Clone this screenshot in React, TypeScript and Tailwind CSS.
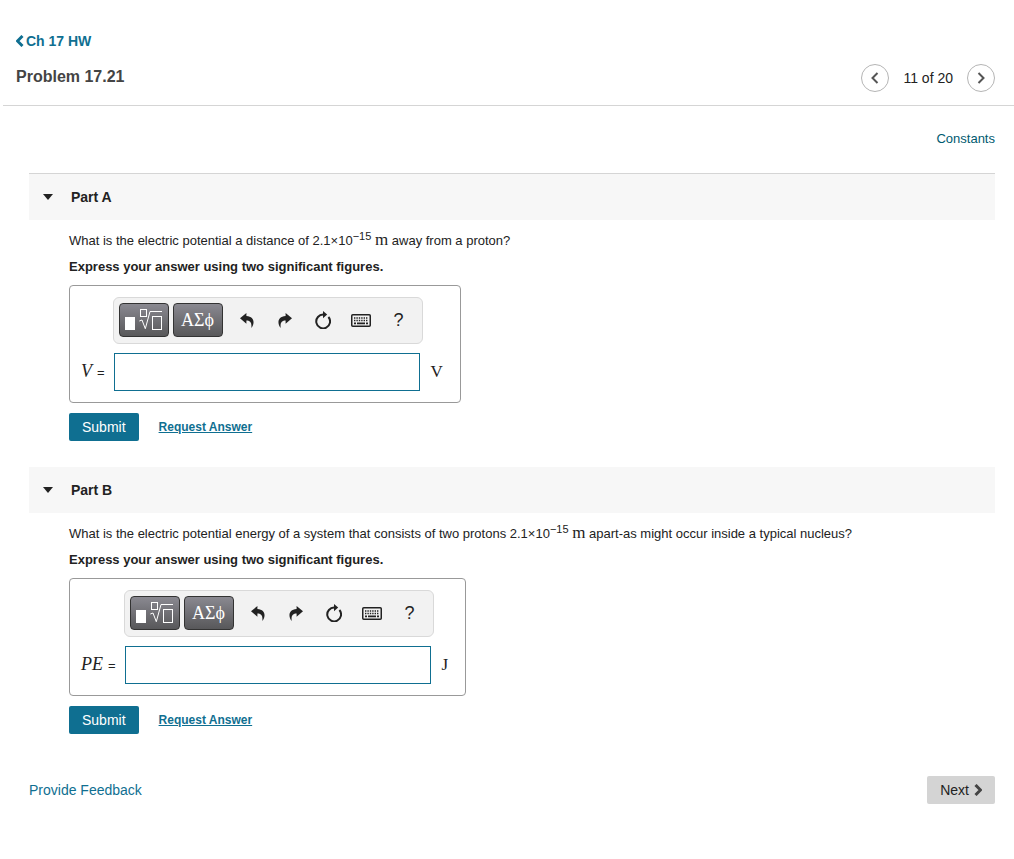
import type { ReactNode } from 'react'

function UndoIcon({ className = '' }: { className?: string }) {
  return (
    <svg className={`h-[15px] w-[14px] ${className}`} viewBox="0 0 14 15" fill="currentColor" aria-hidden>
      <path d="M6.4 0 0 5.3l6.4 5.4V7.6c3.6 0 5.6 1.8 4.9 7.4C15 10.6 14.6 3.4 6.4 3Z" />
    </svg>
  )
}

function ResetIcon() {
  return (
    <svg className="h-[18px] w-4" viewBox="0 0 16 18" aria-hidden>
      <path d="M8.5 3.6A6.9 6.9 0 1 0 13.4 6" fill="none" stroke="currentColor" strokeWidth="2" />
      <path d="M8 0l4.2 3.6L8 7.2Z" fill="currentColor" />
    </svg>
  )
}

function KeyboardIcon() {
  return (
    <svg className="h-[13px] w-5" viewBox="0 0 20 13" aria-hidden>
      <rect x="0.75" y="0.75" width="18.5" height="11.5" rx="1" fill="none" stroke="currentColor" strokeWidth="1.5" />
      <path d="M3 4h14M3 6.5h14" stroke="currentColor" strokeWidth="1.5" strokeDasharray="1.4 1" />
      <path d="M3 9.3h2M6 9.3h8M15 9.3h2" stroke="currentColor" strokeWidth="1.7" />
    </svg>
  )
}

function TemplatesIcon() {
  return (
    <svg className="h-[22px] w-[39px]" viewBox="0 0 39 22" fill="none" stroke="#fff" aria-hidden>
      <rect x="1" y="8" width="10" height="13" fill="#fff" stroke="none" />
      <rect x="16.5" y="0.5" width="6" height="7" />
      <path d="M15.3 12 18 11l3.3 8.7L26 2.5h12" />
      <rect x="28.5" y="7.5" width="9" height="13" />
    </svg>
  )
}

function Chevron({ className, width, flip }: { className: string; width: number; flip?: boolean }) {
  return (
    <svg className={className} viewBox="0 0 8 12" fill="none" stroke="currentColor" strokeWidth={width} aria-hidden>
      <path d={flip ? 'M1.5 1 6.5 6l-5 5' : 'M6.5 1 1.5 6l5 5'} />
    </svg>
  )
}

function ToolButton({ label, children }: { label: string; children: ReactNode }) {
  return (
    <button type="button" aria-label={label} className="flex h-[34px] w-[38px] items-center justify-center">
      {children}
    </button>
  )
}

const paletteClass =
  'flex h-[34px] w-[50px] items-center justify-center rounded border border-[#333] bg-gradient-to-b from-[#8a8991] to-[#58585a] text-white'

function Toolbar() {
  return (
    <div className="flex items-center rounded-md border border-[#d9d9d9] bg-[#f2f2f2] pb-1.5 pl-[5px] pr-1 pt-[5px]">
      <button type="button" aria-label="Templates" className={paletteClass}>
        <TemplatesIcon />
      </button>
      <button type="button" className={`ml-1 mr-[5px] font-["Liberation_Serif",serif] text-[18px] ${paletteClass}`}>
        ΑΣϕ
      </button>
      <ToolButton label="Undo">
        <UndoIcon />
      </ToolButton>
      <ToolButton label="Redo">
        <UndoIcon className="-scale-x-100" />
      </ToolButton>
      <ToolButton label="Reset">
        <ResetIcon />
      </ToolButton>
      <ToolButton label="Keyboard shortcuts">
        <KeyboardIcon />
      </ToolButton>
      <ToolButton label="Help">
        <span className="text-[18px]">?</span>
      </ToolButton>
    </div>
  )
}

type PartProps = {
  id: string
  title: string
  symbol: string
  unit: string
  headerClass?: string
  children: ReactNode
}

function Part({ id, title, symbol, unit, headerClass = '', children }: PartProps) {
  return (
    <section>
      <h2 className={`bg-[#f7f7f7] ${headerClass}`}>
        <button type="button" aria-expanded className="flex h-[46px] w-full items-center px-3.5 text-sm font-bold">
          <svg className="mr-[18px] h-1.5 w-2.5" viewBox="0 0 10 6" fill="currentColor" aria-hidden>
            <path d="M0 0h10L5 6Z" />
          </svg>
          {title}
        </button>
      </h2>
      <div className="px-10 pt-2 text-[13px] leading-[26px]">
        <p>{children}</p>
        <p className="font-bold">Express your answer using two significant figures.</p>
        <div className="mt-[5px] grid w-fit grid-cols-[auto_auto_auto] items-center gap-x-2 gap-y-[9px] rounded border border-[#999] py-[11px] pl-[11px] pr-[17px]">
          <div className="col-start-2">
            <Toolbar />
          </div>
          <label htmlFor={id} className="col-start-1 flex items-baseline gap-[5px]">
            <i className='font-["Liberation_Serif",serif] text-[18px]'>{symbol}</i>
            <span>=</span>
          </label>
          <input id={id} type="text" className="ml-px h-[38px] w-[306px] border border-[#0f6f91] px-2 outline-none" />
          <span className='font-["Liberation_Serif",serif] text-[17px]'>{unit}</span>
        </div>
        <div className="mt-2.5 flex items-center gap-5">
          <button type="button" className="h-7 rounded-xs bg-[#0f6f91] px-[13px] text-sm text-white">
            Submit
          </button>
          <a href="#" className="text-xs font-bold text-[#0f6f91] underline">
            Request Answer
          </a>
        </div>
      </div>
    </section>
  )
}

function Distance() {
  return (
    <>
      2.1×10<sup className="text-[11px]">−15</sup>{' '}
      <span className='font-["Liberation_Serif",serif] text-[17px] leading-none'>m</span>
    </>
  )
}

const roundClass = 'flex h-7 w-7 items-center justify-center rounded-full border border-[#b5b5b5] text-[#555]'

export default function App() {
  return (
    <div className='min-h-screen bg-white font-["Liberation_Sans",Arial,sans-serif] text-sm text-[#222]'>
      <header className="ml-[3px] flex items-end justify-between border-b border-[#d5d5d5] pb-[13px] pl-[13px] pr-[19px] pt-[31px]">
        <div>
          <a href="#" className="flex items-center gap-0.5 font-bold text-[#0f6f91]">
            <Chevron className="h-3 w-2" width={3} />
            Ch 17 HW
          </a>
          <h1 className="mt-3.5 pb-[3px] text-base font-bold leading-6 text-[#444]">Problem 17.21</h1>
        </div>
        <nav aria-label="Problems" className="flex items-center gap-3.5">
          <button type="button" aria-label="Previous" className={roundClass}>
            <Chevron className="h-3 w-2" width={2} />
          </button>
          <span>11 of 20</span>
          <button type="button" aria-label="Next problem" className={roundClass}>
            <Chevron className="h-3 w-2" width={2} flip />
          </button>
        </nav>
      </header>
      <main className="pl-[29px] pr-[19px]">
        <div className="flex justify-end pb-6 pt-[23px] text-[13px] leading-5">
          <a href="#" className="text-[#005a70]">
            Constants
          </a>
        </div>
        <div className="flex flex-col gap-[26px]">
          <Part id="answer-v" title="Part A" symbol="V" unit="V" headerClass="border-t border-[#d5d5d5]">
            What is the electric potential a distance of <Distance /> away from a proton?
          </Part>
          <Part id="answer-pe" title="Part B" symbol="PE" unit="J">
            What is the electric potential energy of a system that consists of two protons <Distance /> apart-as might
            occur inside a typical nucleus?
          </Part>
        </div>
        <footer className="flex items-center justify-between pt-[42px]">
          <a href="#" className="text-[#0f6f91]">
            Provide Feedback
          </a>
          <button type="button" className="flex h-7 items-center gap-[5px] rounded-xs bg-[#d4d4d4] px-[13px]">
            Next
            <Chevron className="h-3 w-2 text-[#444]" width={3} flip />
          </button>
        </footer>
      </main>
    </div>
  )
}
